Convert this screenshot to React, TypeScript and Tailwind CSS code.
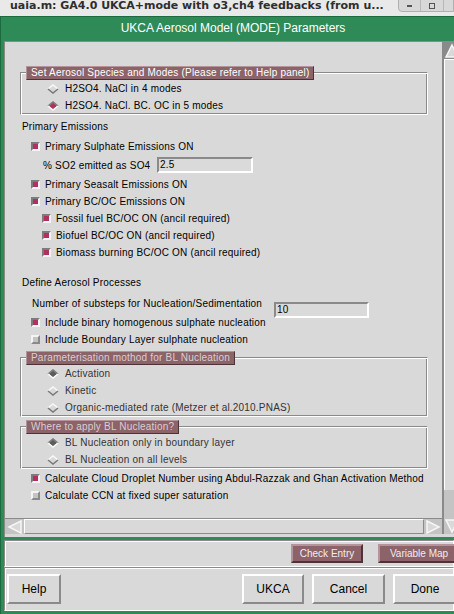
import React from "react";

type RadioState = "off" | "on" | "dim";

function Diamond({ state }: { state: RadioState }) {
  const sunken = state !== "off";
  const top = sunken ? "#7a7a7a" : "#f8f8f8";
  const bottom = sunken ? "#f8f8f8" : "#7a7a7a";
  const fill = state === "on" ? "#b03060" : state === "dim" ? "#5c5c5c" : "#d9d9d9";
  return (
    <svg width="12" height="10" viewBox="0 0 12 10" className="shrink-0">
      <polygon points="6,1.5 10,5 6,8.5 2,5" fill={fill} />
      <polyline points="1,5 6,1 11,5" fill="none" stroke={top} strokeWidth="1.6" />
      <polyline points="1,5 6,9 11,5" fill="none" stroke={bottom} strokeWidth="1.6" />
    </svg>
  );
}

function Check({ on }: { on: boolean }) {
  return (
    <span
      className={`block w-[9px] h-[9px] shrink-0 border-2 ${
        on
          ? "border-t-[#7c7c7c] border-l-[#7c7c7c] border-b-[#f4f4f4] border-r-[#f4f4f4] bg-[#b03060]"
          : "border-t-[#f4f4f4] border-l-[#f4f4f4] border-b-[#8a8a8a] border-r-[#8a8a8a] bg-[#c4c4c4]"
      }`}
    />
  );
}

function Entry({ value, className }: { value: string; className: string }) {
  return (
    <div
      className={`h-[16px] border-2 border-t-[#8a8a8a] border-l-[#8a8a8a] border-b-white border-r-white bg-[#dadada] px-[1px] text-[10px] leading-[12px] ${className}`}
    >
      {value}
    </div>
  );
}

function Radio({ text, state }: { text: string; state: RadioState }) {
  return (
    <div className="flex items-center h-[17px] pl-[26px] gap-[6px]">
      <Diamond state={state} />
      <span>{text}</span>
    </div>
  );
}

function CheckRow({ text, on, indent = false, className = "" }: { text: string; on: boolean; indent?: boolean; className?: string }) {
  return (
    <div className={`flex items-center h-[17px] gap-[5px] ${indent ? "pl-[37px]" : "pl-[26px]"} ${className}`}>
      <Check on={on} />
      <span>{text}</span>
    </div>
  );
}

function Group({ label, dim = false, className = "", children }: { label: string; dim?: boolean; className?: string; children: React.ReactNode }) {
  return (
    <div
      className={`ml-[15px] w-[408px] border border-t-[#8a8a8a] border-l-[#8a8a8a] border-b-white border-r-white shadow-[inset_1px_1px_0_#fff,inset_-1px_-1px_0_#8a8a8a] ${className}`}
    >
      <div
        className={`-mt-[7px] ml-[5px] w-fit h-[14px] px-[4px] bg-[#8b6369] border border-t-[#b4949a] border-l-[#b4949a] border-b-[#4d3237] border-r-[#4d3237] leading-[12px] ${
          dim ? "text-[#dccdd0]" : "text-white"
        }`}
      >
        {label}
      </div>
      {children}
    </div>
  );
}

function Arrow({ dir }: { dir: "up" | "down" | "left" | "right" }) {
  const pts = {
    up: "8,2 14,14 2,14",
    down: "2,2 14,2 8,14",
    left: "2,8 14,2 14,14",
    right: "2,2 14,8 2,14",
  }[dir];
  return (
    <svg width="16" height="16" viewBox="0 0 16 16" className="shrink-0">
      <polygon points={pts} fill="#d9d9d9" stroke="#f6f6f6" strokeWidth="1.5" />
    </svg>
  );
}

function TkButton({ label, className }: { label: string; className: string }) {
  return (
    <div
      className={`h-[30px] shrink-0 flex items-center justify-center border-2 border-t-white border-l-white border-b-[#8a8a8a] border-r-[#8a8a8a] bg-[#d9d9d9] text-[12px] text-black ${className}`}
    >
      {label}
    </div>
  );
}

function MauveButton({ label, className }: { label: string; className: string }) {
  return (
    <div
      className={`h-[19px] shrink-0 flex items-center justify-center bg-[#8b6369] border-2 border-t-[#b4949a] border-l-[#b4949a] border-b-[#4d3237] border-r-[#4d3237] text-[10px] text-[#f4ecee] ${className}`}
    >
      {label}
    </div>
  );
}

export default function App() {
  return (
    <div className="w-[454px] h-[614px] overflow-hidden bg-[#e9e9e9] flex flex-col font-['Liberation_Sans',Arial,sans-serif]">
      {/* window title bar */}
      <div className="h-[16px] shrink-0 flex bg-[#e9e9e9] overflow-hidden">
        <div className="pl-[10px] leading-[12px] text-[11px] font-bold text-[#2e2e2e] whitespace-nowrap font-['DejaVu_Sans',sans-serif] flex-1">
          uaia.m: GA4.0 UKCA+mode with o3,ch4 feedbacks (from u...
        </div>
        <div className="w-[56px] h-[13px] -mt-[1px] flex border border-[#b0b0b0] rounded-bl-[4px] bg-[#d8d8d8]">
          <div className="w-[22px] flex items-end justify-center pb-[4px] border-r border-[#b8b8b8]">
            <span className="block w-[5px] h-[2px] bg-[#555]" />
          </div>
          <div className="w-[23px] flex items-center justify-center border-r border-[#b8b8b8]">
            <span className="block w-[6px] h-[6px] border-[1.5px] border-[#555]" />
          </div>
          <div className="flex-1" />
        </div>
      </div>

      {/* green dialog frame */}
      <div className="flex-1 flex flex-col bg-[#2e8b57] border-l border-t border-[#1d6a40] pl-[3px] pb-[3px]">
        <div className="h-[24px] shrink-0 pl-[8px] text-center text-white text-[12px] leading-[22px]">
          UKCA Aerosol Model (MODE) Parameters
        </div>

        {/* scrolled panel */}
        <div className="h-[496px] shrink-0 flex flex-col bg-[#d9d9d9] border-t border-l border-[#8a8a8a] pb-[3px]">
          <div className="flex-1 flex min-h-0">
            <div className="flex-1 flex flex-col min-w-0">
              <div className="flex-1 min-h-0 overflow-hidden pt-[30px] text-[10px] leading-[17px] tracking-[0.2px] text-black">
                <Group label="Set Aerosol Species and Modes (Please refer to Help panel)">
                  <Radio text="H2SO4. NaCl in 4 modes" state="off" />
                  <Radio text="H2SO4. NaCl. BC. OC in 5 modes" state="on" />
                </Group>

                <div className="h-[17px] mt-[3px] pl-[17px]">Primary Emissions</div>
                <CheckRow text="Primary Sulphate Emissions ON" on className="mt-[3px]" />
                <div className="flex items-center h-[18px] mt-[1px] pl-[38px]">
                  <span className="w-[114px] shrink-0">% SO2 emitted as SO4</span>
                  <Entry value="2.5" className="w-[96px]" />
                </div>
                <CheckRow text="Primary Seasalt Emissions ON" on className="mt-[2px]" />
                <CheckRow text="Primary BC/OC Emissions ON" on />
                <CheckRow text="Fossil fuel BC/OC ON (ancil required)" on indent />
                <CheckRow text="Biofuel BC/OC ON (ancil required)" on indent />
                <CheckRow text="Biomass burning BC/OC ON (ancil required)" on indent />

                <div className="h-[17px] mt-[13px] pl-[17px]">Define Aerosol Processes</div>
                <div className="flex items-start h-[17px] mt-[4px] pl-[27px]">
                  <span className="w-[242px] shrink-0">Number of substeps for Nucleation/Sedimentation</span>
                  <Entry value="10" className="w-[95px] mt-[7px]" />
                </div>
                <CheckRow text="Include binary homogenous sulphate nucleation" on className="mt-[2px]" />
                <CheckRow text="Include Boundary Layer sulphate nucleation" on={false} />

                <Group label="Parameterisation mothod for BL Nucleation" dim className="mt-[9px] text-[#333]">
                  <Radio text="Activation" state="dim" />
                  <Radio text="Kinetic" state="off" />
                  <Radio text="Organic-mediated rate (Metzer et al.2010.PNAS)" state="off" />
                </Group>
                <Group label="Where to apply BL Nucleation?" dim className="mt-[9px] text-[#333]">
                  <Radio text="BL Nucleation only in boundary layer" state="dim" />
                  <Radio text="BL Nucleation on all levels" state="off" />
                </Group>

                <CheckRow text="Calculate Cloud Droplet Number using Abdul-Razzak and Ghan Activation Method" on className="mt-[1px]" />
                <CheckRow text="Calculate CCN at fixed super saturation" on={false} />
              </div>

              {/* horizontal scrollbar */}
              <div className="h-[16px] shrink-0 flex border-t border-[#8a8a8a] pl-[2px] pr-[1px] bg-[#c4c4c4]">
                <Arrow dir="left" />
                <div className="flex-1 mx-[1px] border border-t-white border-l-white border-b-[#8a8a8a] border-r-[#8a8a8a] bg-[#d9d9d9]" />
                <Arrow dir="right" />
              </div>
            </div>

            {/* vertical scrollbar */}
            <div className="w-[12px] shrink-0 flex flex-col border-l-2 border-[#8a8a8a] bg-[#c4c4c4]">
              <div className="h-[17px] shrink-0 bg-[#8a8a8a] flex items-center justify-start">
                <Arrow dir="up" />
              </div>
              <div className="h-[431px] shrink-0 border-t border-l border-white bg-[#d9d9d9]" />
              <div className="flex-1" />
              <div className="h-[16px] shrink-0 flex">
                <Arrow dir="down" />
              </div>
            </div>
          </div>
        </div>

        {/* button bar */}
        <div className="mt-[3px] h-[27px] shrink-0 flex items-center bg-[#d9d9d9] border border-t-[#8a8a8a] border-l-[#8a8a8a] border-b-white border-r-white shadow-[inset_1px_1px_0_#fff]">
          <MauveButton label="Check Entry" className="ml-[286px] w-[72px]" />
          <MauveButton label="Variable Map" className="ml-[15px] w-[82px]" />
        </div>
        <div className="flex-1 flex items-center bg-[#d9d9d9] border border-t-[#8a8a8a] border-l-[#8a8a8a] border-b-white border-r-white shadow-[inset_1px_1px_0_#fff]">
          <TkButton label="Help" className="ml-[2px] w-[54px]" />
          <TkButton label="UKCA" className="ml-[181px] w-[62px]" />
          <TkButton label="Cancel" className="ml-[8px] w-[73px]" />
          <TkButton label="Done" className="ml-[8px] w-[64px]" />
        </div>
      </div>
    </div>
  );
}
